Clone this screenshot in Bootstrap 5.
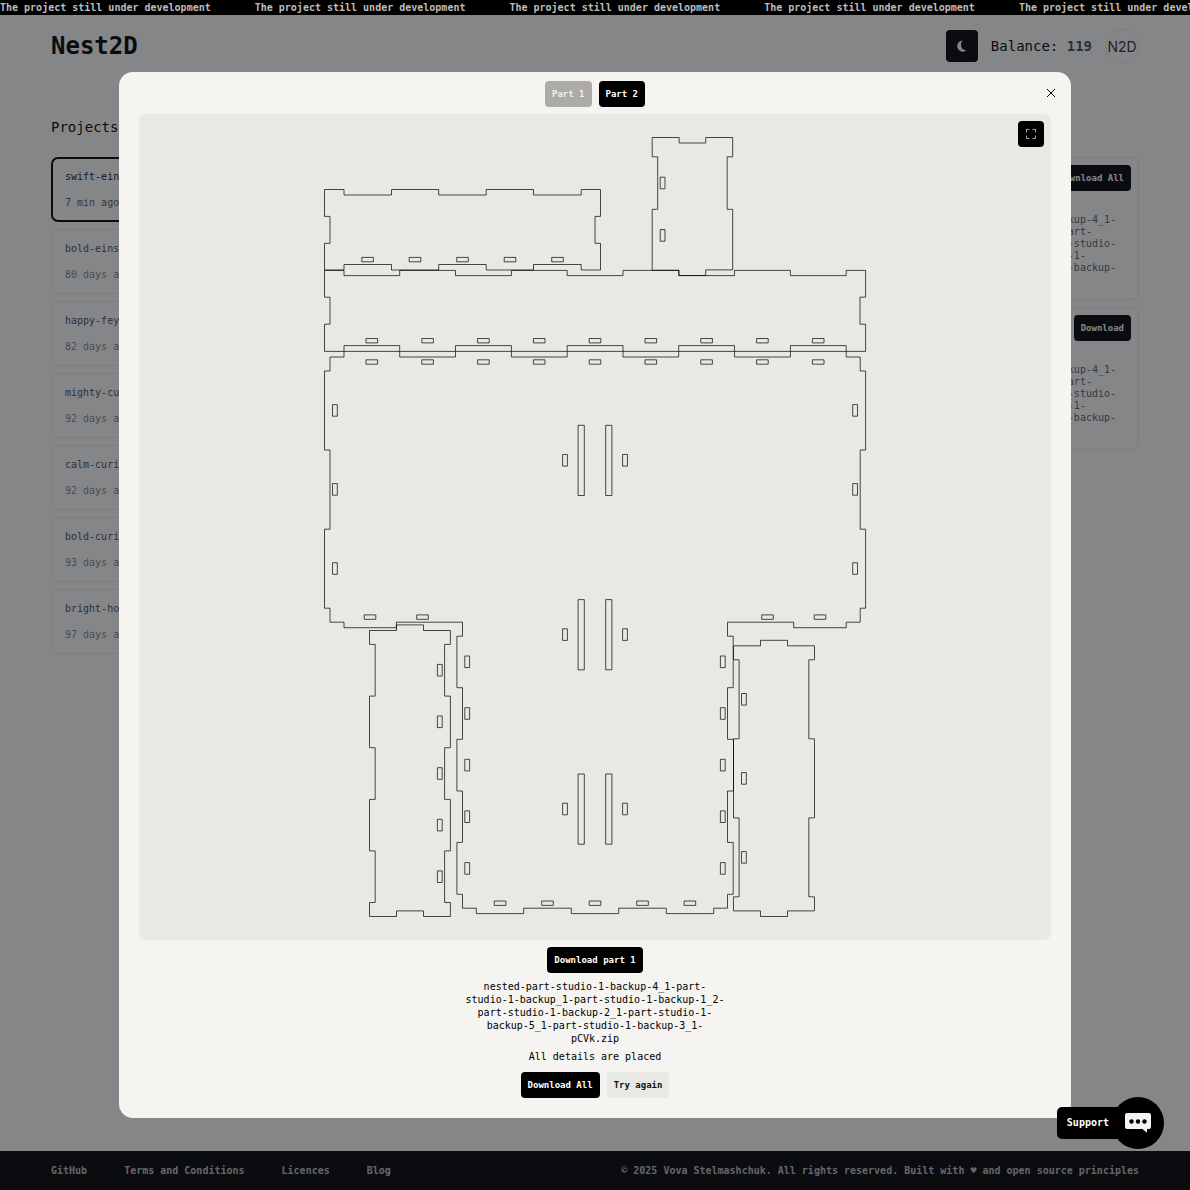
<!DOCTYPE html>
<html lang="en">
<head>
<meta charset="utf-8">
<meta name="viewport" content="width=device-width, initial-scale=1">
<title>Nest2D</title>
<link rel="stylesheet" href="https://cdn.jsdelivr.net/npm/bootstrap@5.3.0/dist/css/bootstrap.min.css">
<script src="https://cdn.jsdelivr.net/npm/bootstrap@5.3.0/dist/js/bootstrap.bundle.min.js"></script>
<style>
  :root { --paper: #f5f4f0; --sheet: #e8e9e4; --edge: #e2e2e0; }
  body { font-family: "DejaVu Sans Mono", "Liberation Mono", monospace; font-size: 10px; line-height: 16px; background: var(--paper); color: #000; }
  a { color: inherit; text-decoration: none; }
  .ticker { height: 15px; line-height: 15px; gap: 44px; background: #000; color: #bdbdbd; z-index: 1070; white-space: nowrap; }
  .side-pad { padding-left: 51px; padding-right: 51px; }
  .site-head { padding-top: 14px; }
  .head-tools { gap: 13px; }
  .brand { font-size: 24px; line-height: 34px; }
  .balance { font-size: 14px; }
  .balance b { color: #444854; }
  .theme-btn { width: 32px; height: 32px; background: #000; color: #f5f4f0; border: 0; border-radius: 4px; }
  .avatar-ring { width: 34px; height: 34px; border: 1px solid var(--edge); font: 14px Inter, sans-serif; color: #2c2e33; }
  .section-title { font-size: 14px; line-height: 20px; font-weight: 400; margin: 54px 0 20px; }
  .stack { gap: 7px; }
  .project { height: 65px; padding: 11px 13px; border: 1px solid var(--edge); border-radius: 7px; gap: 10px; color: #444854; }
  .project small { font-size: 10px; color: #7f8087; }
  .project.current { border: 2px solid #000; padding: 10px 12px; color: #14151a; }
  .project.current small { color: #555660; }
  .result { height: 143px; padding: 7px; border: 1px solid var(--edge); border-radius: 7px; }
  .result p { margin: 23px 15px 0 auto; width: fit-content; line-height: 12px; color: #555861; }
  .ink-btn { height: 26px; padding: 0 7px; font: bold 9px/16px "DejaVu Sans Mono", monospace; border: 0; border-radius: 4px; background: #000; color: #fff; }
  .ink-btn.pale { background: var(--sheet); color: #111; }
  .ink-btn:disabled { background: #acaba8; color: #f0efec; }
  .result .ink-btn { color: #f5f4f0; }
  .site-foot { background: #000; color: #b5b5b3; height: 39px; }
  .foot-links { gap: 37px; }
  .modal-backdrop { --bs-backdrop-bg: rgb(22,24,32); --bs-backdrop-opacity: .5; }
  .preview-dialog { max-width: 80%; margin: 24px auto; min-height: calc(100% - 48px); }
  .preview { background: var(--paper); border: 0; border-radius: 14px; padding: 9px 20px 20px; }
  .tabs-row { gap: 7px; margin-bottom: 7px; }
  .close-btn { top: 11px; right: 10px; width: 20px; height: 20px; padding: 0; border: 0; background: none; }
  .sheet { background: var(--sheet); border-radius: 7px; margin-bottom: 7px; }
  .expand-btn { top: 7px; right: 7px; width: 26px; height: 26px; padding: 0; border: 0; border-radius: 4px; background: #000; }
  .file-name { line-height: 13px; margin: 7px 0 4px; }
  .status { margin-bottom: 7px; }
  .support { right: 26px; bottom: 41px; z-index: 1080; border: 0; background: none; padding: 0; color: #fff; }
  .support-label { height: 32px; line-height: 32px; padding: 0 16px 0 10px; margin-right: -13px; background: #000; border-radius: 5px; font-weight: bold; }
  .support-disc { width: 52px; height: 52px; background: #000; }
</style>
</head>
<body class="d-flex flex-column min-vh-100">

<div class="ticker d-flex overflow-hidden position-sticky top-0 fw-bold">
  <span>The project still under development</span>
  <span>The project still under development</span>
  <span>The project still under development</span>
  <span>The project still under development</span>
  <span>The project still under development</span>
</div>

<header class="site-head side-pad d-flex justify-content-between align-items-center">
  <a href="#" class="brand fw-bold">Nest2D</a>
  <div class="head-tools d-flex align-items-center">
    <button class="theme-btn d-flex align-items-center justify-content-center" type="button" aria-label="Dark theme">
      <svg width="12" height="12" viewBox="0 0 12 12" fill="currentColor"><path d="M6.500.5A5.600 5.600 0 1 0 10.500 10.300 5.200 5.200 0 0 1 5.200 6.500 6.500 6.500 0 0 1 6.500.5z"/></svg>
    </button>
    <span class="balance">Balance: <b>119</b></span>
    <a href="#" class="avatar-ring rounded-circle d-flex align-items-center justify-content-center">N2D</a>
  </div>
</header>

<main class="side-pad flex-grow-1">
  <div class="row">
    <section class="col-3">
      <h2 class="section-title">Projects</h2>
      <div class="stack d-flex flex-column">
        <a href="#" class="project current d-flex flex-column">swift-einstein<small>7 min ago</small></a>
        <a href="#" class="project d-flex flex-column">bold-einstein<small>80 days ago</small></a>
        <a href="#" class="project d-flex flex-column">happy-feynman<small>82 days ago</small></a>
        <a href="#" class="project d-flex flex-column">mighty-curie<small>92 days ago</small></a>
        <a href="#" class="project d-flex flex-column">calm-curie<small>92 days ago</small></a>
        <a href="#" class="project d-flex flex-column">bold-curie<small>93 days ago</small></a>
        <a href="#" class="project d-flex flex-column">bright-hopper<small>97 days ago</small></a>
      </div>
    </section>
    <section class="col-3 offset-6">
      <h2 class="section-title">Results</h2>
      <div class="stack d-flex flex-column">
        <div class="result">
          <div class="d-flex justify-content-end"><button type="button" class="ink-btn">Download All</button></div>
          <p>nested-part-studio-1-backup-4_1-<br>part-studio-1-backup_1-part-<br>studio-1-backup-1_2-part-studio-<br>1-backup-2_1-part-studio-1-<br>backup-5_1-part-studio-1-backup-<br>3_1-pCVk.zip</p>
        </div>
        <div class="result">
          <div class="d-flex justify-content-end"><button type="button" class="ink-btn">Download</button></div>
          <p>nested-part-studio-1-backup-4_1-<br>part-studio-1-backup_1-part-<br>studio-1-backup-1_2-part-studio-<br>1-backup-2_1-part-studio-1-<br>backup-5_1-part-studio-1-backup-<br>3_1-pCVk.zip</p>
        </div>
      </div>
    </section>
  </div>
</main>

<footer class="site-foot side-pad d-flex justify-content-between align-items-center fw-bold">
  <nav class="foot-links d-flex">
    <a href="#">GitHub</a><a href="#">Terms and Conditions</a><a href="#">Licences</a><a href="#">Blog</a>
  </nav>
  <span>© 2025 Vova Stelmashchuk. All rights reserved. Built with ♥ and open source principles</span>
</footer>

<div class="modal-backdrop show"></div>
<div class="modal show d-block" tabindex="-1" role="dialog" aria-label="Nesting preview">
  <div class="modal-dialog modal-dialog-centered preview-dialog">
    <div class="modal-content preview">
      <div class="tabs-row d-flex justify-content-center">
        <button type="button" class="ink-btn" disabled>Part 1</button>
        <button type="button" class="ink-btn">Part 2</button>
      </div>
      <button type="button" class="close-btn position-absolute d-flex align-items-center justify-content-center" aria-label="Close">
        <svg width="10" height="10" viewBox="0 0 10 10" stroke="#000" stroke-width="1" fill="none"><path d="M1 1l8 8M9 1l-8 8"/></svg>
      </button>

      <div class="sheet position-relative">
        <svg class="d-block w-100 h-auto" viewBox="139 114 912 826" fill="none" stroke="#000" stroke-opacity=".7" stroke-width="1" role="img" aria-label="Nested parts">
          <defs>
            <path id="sh" d="M-5.800-2.200H5.800V2.200H-5.800z"/>
            <path id="sv" d="M-2.400-5.800H2.400V5.800H-2.400z"/>
            <path id="sl" d="M-3.100-35.100H3.100V35.100H-3.100z"/>
          </defs>
          <!-- short side, top left -->
          <path d="M324.500 189.500H344V195H391.500V189.500H438.700V195H486.200V189.500H533.500V195H581.200V189.500H600.500V216.400H595V243.300H600.500V270H581.200V264.500H533.500V270H486.200V264.500H438.700V270H391.500V264.500H344V270H324.500V243.300H330V216.400H324.500z"/>
          <g><use href="#sh" x="367.600" y="259.600"/><use href="#sh" x="415" y="259.600"/><use href="#sh" x="462.500" y="259.600"/><use href="#sh" x="510" y="259.600"/><use href="#sh" x="557.500" y="259.600"/></g>
          <!-- small upright, top right -->
          <path d="M652.200 137.500H679.200V143H705.700V137.500H732.700V156.800H727.200V209.300H732.700V269.900H705.700V275.500H679V270.300H652.200V209.300H657.700V156.800H652.200z"/>
          <use href="#sv" x="662.600" y="183"/><use href="#sv" x="662.600" y="235.400"/>
          <!-- long side -->
          <path d="M324.500 270.400H344V275.600H399.700V270.400H455.500V275.600H511.400V270.400H567.200V275.600H623V270.400H678.700V275.600H734.500V270.400H790.400V275.600H846.200V270.400H865.600V297.200H860V324.200H865.600V351.400H846.200V345.600H790.400V351.400H734.500V345.600H678.700V351.400H623V345.600H567.200V351.400H511.400V345.600H455.500V351.400H399.700V345.600H344V351.400H324.500V324.200H330V297.200H324.500z"/>
          <g><use href="#sh" x="371.800" y="340.700"/><use href="#sh" x="427.600" y="340.700"/><use href="#sh" x="483.400" y="340.700"/><use href="#sh" x="539.200" y="340.700"/><use href="#sh" x="595" y="340.700"/><use href="#sh" x="650.800" y="340.700"/><use href="#sh" x="706.600" y="340.700"/><use href="#sh" x="762.400" y="340.700"/><use href="#sh" x="818.200" y="340.700"/></g>
          <!-- T-shaped base -->
          <path d="M330 357H344V351.400H399.700V357H455.500V351.400H511.400V357H567.200V351.400H623V357H678.700V351.400H734.500V357H790.400V351.400H846.200V357H860.200V371H865.600V450H860.200V529.200H865.600V608.200H860.200V622.200H846.200V627.700H793.700V622.200H727.500V636.200H733.200V687.700H727.500V739.300H733.500V791H727.500V842.400H733.200V894.300H727.500V908.200H713.700V913.600H666.300V908.200H618.700V913.600H571.300V908.200H523.700V913.600H476.300V908.200H462.500V894.300H456.900V842.400H462.500V791H456.900V739.300H462.500V687.700H456.900V636.200H462.500V622.200H396.400V627.700H344V622.200H330V608.200H324.500V529.200H330V450H324.500V371H330z"/>
          <g><use href="#sh" x="371.800" y="362"/><use href="#sh" x="427.600" y="362"/><use href="#sh" x="483.400" y="362"/><use href="#sh" x="539.200" y="362"/><use href="#sh" x="595" y="362"/><use href="#sh" x="650.800" y="362"/><use href="#sh" x="706.600" y="362"/><use href="#sh" x="762.400" y="362"/><use href="#sh" x="818.200" y="362"/></g>
          <g><use href="#sv" x="334.900" y="410.400"/><use href="#sv" x="334.900" y="489.400"/><use href="#sv" x="334.900" y="568.500"/><use href="#sv" x="855.100" y="410.400"/><use href="#sv" x="855.100" y="489.400"/><use href="#sv" x="855.100" y="568.500"/></g>
          <g><use href="#sl" x="581.200" y="460.400"/><use href="#sl" x="608.800" y="460.400"/><use href="#sl" x="581.200" y="634.700"/><use href="#sl" x="608.800" y="634.700"/><use href="#sl" x="581.200" y="809.100"/><use href="#sl" x="608.800" y="809.100"/></g>
          <g><use href="#sv" x="565" y="460.300"/><use href="#sv" x="625" y="460.300"/><use href="#sv" x="565" y="634.600"/><use href="#sv" x="625" y="634.600"/><use href="#sv" x="565" y="809"/><use href="#sv" x="625" y="809"/></g>
          <g><use href="#sh" x="370" y="617.100"/><use href="#sh" x="422.500" y="617.100"/><use href="#sh" x="767.500" y="617.100"/><use href="#sh" x="820" y="617.100"/></g>
          <g><use href="#sv" x="467.200" y="661.800"/><use href="#sv" x="467.200" y="713.500"/><use href="#sv" x="467.200" y="765.100"/><use href="#sv" x="467.200" y="816.700"/><use href="#sv" x="467.200" y="868.400"/><use href="#sv" x="722.800" y="661.800"/><use href="#sv" x="722.800" y="713.500"/><use href="#sv" x="722.800" y="765.100"/><use href="#sv" x="722.800" y="816.700"/><use href="#sv" x="722.800" y="868.400"/></g>
          <g><use href="#sh" x="500.100" y="903.200"/><use href="#sh" x="547.500" y="903.200"/><use href="#sh" x="595" y="903.200"/><use href="#sh" x="642.500" y="903.200"/><use href="#sh" x="689.900" y="903.200"/></g>
          <!-- left leg -->
          <path d="M369.500 630.500H396.500V624.900H423.500V630.500H450.400V644.400H444.600V696.100H450.400V747.700H444.600V799.400H450.400V850.900H444.600V902.500H450.400V916.500H423.500V910.900H396.500V916.500H369.500V902.500H375.200V850.900H369.500V799.400H375.200V747.700H369.500V696.100H375.200V644.400H369.500z"/>
          <g><use href="#sv" x="439.800" y="670.200"/><use href="#sv" x="439.800" y="721.800"/><use href="#sv" x="439.800" y="773.500"/><use href="#sv" x="439.800" y="825.100"/><use href="#sv" x="439.800" y="876.700"/></g>
          <!-- right leg -->
          <path d="M733.500 645.800H760.500V640.300H787.500V645.800H814.500V659.800H808.800V738.800H814.500V817.900H808.800V896.800H814.500V910.900H787.500V916.500H760.500V910.900H733.500V896.800H739.100V817.900H733.500V738.800H739.100V659.800H733.500z"/>
          <g><use href="#sv" x="743.900" y="699.300"/><use href="#sv" x="743.900" y="778.400"/><use href="#sv" x="743.900" y="857.400"/></g>
        </svg>
        <button type="button" class="expand-btn position-absolute d-flex align-items-center justify-content-center" aria-label="Full screen">
          <svg width="12" height="12" viewBox="0 0 12 12" fill="none" stroke="#a8a8a4" stroke-width="1"><path d="M1.500 4.500V1.500H4.500M7.500 1.500h3V4.500M10.500 7.500v3H7.500M4.500 10.500H1.500V7.500"/></svg>
        </button>
      </div>

      <div class="text-center">
        <button type="button" class="ink-btn d-block mx-auto">Download part 1</button>
        <p class="file-name">nested-part-studio-1-backup-4_1-part-<br>studio-1-backup_1-part-studio-1-backup-1_2-<br>part-studio-1-backup-2_1-part-studio-1-<br>backup-5_1-part-studio-1-backup-3_1-<br>pCVk.zip</p>
        <p class="status">All details are placed</p>
        <div class="tabs-row d-flex justify-content-center mb-0">
          <button type="button" class="ink-btn">Download All</button>
          <button type="button" class="ink-btn pale">Try again</button>
        </div>
      </div>
    </div>
  </div>
</div>

<button type="button" class="support position-fixed d-flex align-items-center">
  <span class="support-label">Support</span>
  <span class="support-disc rounded-circle d-flex align-items-center justify-content-center">
    <svg width="26" height="20" viewBox="0 0 26 20"><path d="M2 0h22a2 2 0 0 1 2 2v12a2 2 0 0 1-2 2h-2v3.700L17.500 16H2a2 2 0 0 1-2-2V2a2 2 0 0 1 2-2z" fill="#f5f4f0"/><circle cx="6.500" cy="8.500" r="2.200"/><circle cx="13" cy="8.500" r="2.200"/><circle cx="19.500" cy="8.500" r="2.200"/></svg>
  </span>
</button>
</body>
</html>
